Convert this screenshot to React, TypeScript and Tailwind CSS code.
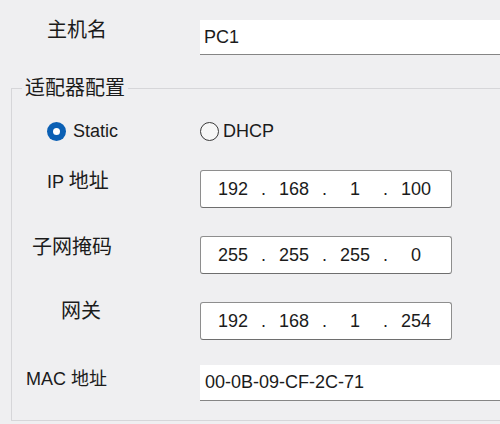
import React from "react";

const FONT = { fontFamily: '"Liberation Sans", "Noto Sans CJK SC", sans-serif' };

function IpBox({ parts }: { parts: string[] }) {
  return (
    <div className="flex h-[38px] w-[252px] items-center rounded-[3px] border border-[#8e8e8e] border-b-[#6e6e6e] bg-white pl-[9px] text-[18px] text-[#1b1b1b]">
      {parts.map((p, i) => (
        <React.Fragment key={i}>
          <span className="w-[46px] text-center">{p}</span>
          {i < parts.length - 1 && <span className="w-[15px] text-center">.</span>}
        </React.Fragment>
      ))}
    </div>
  );
}

export default function App() {
  return (
    <div className="h-[424px] w-[500px] overflow-hidden bg-[#efeff1] pt-[20px] text-[#1b1b1b]" style={FONT}>
      {/* Host name */}
      <div className="flex h-[35px] items-center">
        <div className="w-[200px] pb-[15px] pl-[47px] text-[20px] leading-[28px]">主机名</div>
        <div className="flex h-[35px] flex-1 items-center border-b border-[#858585] bg-white pl-[4px] text-[18px]">PC1</div>
      </div>

      {/* Adapter config group */}
      <fieldset className="ml-[11px] mt-[21px] h-[345px] border-y border-l border-r-0 border-[#d6d6d9] pb-[19px]">
        <legend className="ml-[10px] px-[3px] text-[20px] leading-[24px]">适配器配置</legend>

        {/* Radios */}
        <div className="mt-[20px] flex h-[22px] items-center text-[18px]">
          <div className="flex w-[188px] items-center gap-[7px] pl-[35px]">
            <span className="flex h-[19px] w-[19px] items-center justify-center rounded-full bg-[#0a5fb4]">
              <span className="h-[7px] w-[7px] rounded-full bg-white" />
            </span>
            <span>Static</span>
          </div>
          <div className="flex items-center gap-[4px]">
            <span className="h-[19px] w-[19px] rounded-full border border-[#3a3a3a] bg-[#f7f7f7]" />
            <span>DHCP</span>
          </div>
        </div>

        {/* IP */}
        <div className="mt-[28px] flex h-[38px] items-center">
          <div className="w-[188px] pb-[16px] pl-[35px] text-[20px] leading-[28px]">
            <span className="text-[18px]">IP </span>地址
          </div>
          <IpBox parts={["192", "168", "1", "100"]} />
        </div>

        {/* Mask */}
        <div className="mt-[28px] flex h-[38px] items-center">
          <div className="w-[188px] pb-[16px] pl-[20px] text-[20px] leading-[28px]">子网掩码</div>
          <IpBox parts={["255", "255", "255", "0"]} />
        </div>

        {/* Gateway */}
        <div className="mt-[28px] flex h-[38px] items-center">
          <div className="w-[188px] pb-[20px] pl-[49px] text-[20px] leading-[28px]">网关</div>
          <IpBox parts={["192", "168", "1", "254"]} />
        </div>

        {/* MAC */}
        <div className="mt-[25px] flex h-[36px] items-center">
          <div className="w-[188px] pb-[8px] pl-[14px] text-[18px] leading-[28px]">MAC 地址</div>
          <div className="flex h-[36px] flex-1 items-center border-b border-[#858585] bg-white pl-[5px] text-[18px]">
            00-0B-09-CF-2C-71
          </div>
        </div>
      </fieldset>
    </div>
  );
}
